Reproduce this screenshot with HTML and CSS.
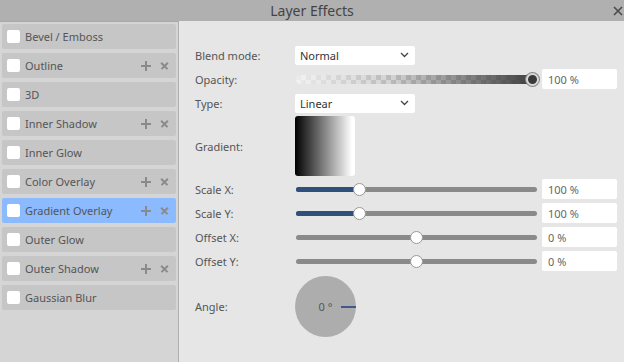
FILE: index.html
```html
<!DOCTYPE html>
<html lang="en">
<head>
    <meta charset="UTF-8">
    <title>Layer Effects</title>
    <link rel="stylesheet" href="styles.css">
</head>
<body>
    <div class="dialog">
        <div class="titlebar">
            <span class="title">Layer Effects</span>
            <svg class="close" width="10" height="10" viewBox="0 0 10 10"><path d="M1 1l8 8M9 1l-8 8" stroke="#4a4a4a" stroke-width="1.6"/></svg>
        </div>
        <div class="main">
            <div class="effects">
                <div class="effect"><span class="check"></span><span class="name">Bevel / Emboss</span></div>
                <div class="effect"><span class="check"></span><span class="name">Outline</span><span class="tools"><i class="plus"></i><i class="del"></i></span></div>
                <div class="effect"><span class="check"></span><span class="name">3D</span></div>
                <div class="effect"><span class="check"></span><span class="name">Inner Shadow</span><span class="tools"><i class="plus"></i><i class="del"></i></span></div>
                <div class="effect"><span class="check"></span><span class="name">Inner Glow</span></div>
                <div class="effect"><span class="check"></span><span class="name">Color Overlay</span><span class="tools"><i class="plus"></i><i class="del"></i></span></div>
                <div class="effect on"><span class="check"></span><span class="name">Gradient Overlay</span><span class="tools"><i class="plus"></i><i class="del"></i></span></div>
                <div class="effect"><span class="check"></span><span class="name">Outer Glow</span></div>
                <div class="effect"><span class="check"></span><span class="name">Outer Shadow</span><span class="tools"><i class="plus"></i><i class="del"></i></span></div>
                <div class="effect"><span class="check"></span><span class="name">Gaussian Blur</span></div>
            </div>
            <div class="settings">
                <div class="row">
                    <label>Blend mode:</label>
                    <div class="select">Normal<svg width="9" height="6" viewBox="0 0 9 6"><path d="M1 1l3.5 3.5L8 1" fill="none" stroke="#444" stroke-width="1.3"/></svg></div>
                </div>
                <div class="row">
                    <label>Opacity:</label>
                    <div class="slider opacity"><span class="knob dark" style="left:236px"></span></div>
                    <div class="value">100 %</div>
                </div>
                <div class="row">
                    <label>Type:</label>
                    <div class="select">Linear<svg width="9" height="6" viewBox="0 0 9 6"><path d="M1 1l3.5 3.5L8 1" fill="none" stroke="#444" stroke-width="1.3"/></svg></div>
                </div>
                <div class="row tall">
                    <label>Gradient:</label>
                    <div class="swatch"></div>
                </div>
                <div class="row">
                    <label>Scale X:</label>
                    <div class="slider"><span class="fill" style="width:63px"></span><span class="knob" style="left:63px"></span></div>
                    <div class="value">100 %</div>
                </div>
                <div class="row">
                    <label>Scale Y:</label>
                    <div class="slider"><span class="fill" style="width:63px"></span><span class="knob" style="left:63px"></span></div>
                    <div class="value">100 %</div>
                </div>
                <div class="row">
                    <label>Offset X:</label>
                    <div class="slider"><span class="knob" style="left:120px"></span></div>
                    <div class="value">0 %</div>
                </div>
                <div class="row">
                    <label>Offset Y:</label>
                    <div class="slider"><span class="knob" style="left:120px"></span></div>
                    <div class="value">0 %</div>
                </div>
                <div class="row angle">
                    <label>Angle:</label>
                    <div class="dial"><span class="deg">0 °</span><span class="hand"></span></div>
                </div>
            </div>
        </div>
    </div>
</body>
</html>
```

FILE: styles.css
```css
* {
    padding: 0;
    margin: 0;
    box-sizing: border-box;
}
body {
    font-family: "Segoe UI", "Noto Sans", sans-serif;
    font-size: 11px;
    color: #555;
    background: #e6e6e6;
}
.dialog {
    width: 624px;
    height: 362px;
    display: flex;
    flex-direction: column;
}
.titlebar {
    height: 21px;
    background: #b0b0b0;
    display: flex;
    align-items: center;
    justify-content: center;
    position: relative;
}
.title {
    font-size: 14px;
    color: #444;
}
.close {
    position: absolute;
    right: 1px;
    top: 6px;
}
.main {
    flex: 1;
    display: flex;
}
.effects {
    width: 179px;
    background: #d5d5d5;
    border-top: 1px solid #a8a8a8;
    border-right: 1px solid #b0b0b0;
    padding: 2px 2px 0 2px;
    display: flex;
    flex-direction: column;
    gap: 4px;
}
.effect {
    height: 25px;
    background: #c6c6c6;
    border-radius: 2px;
    display: flex;
    align-items: center;
    padding-left: 5px;
}
.effect.on {
    background: #8bbaff;
}
.check {
    width: 13px;
    height: 13px;
    background: #fff;
    border-radius: 2px;
    margin-right: 5px;
}
.name {
    flex: 1;
    font-size: 11px;
    color: #555;
}
.tools {
    display: flex;
    gap: 8px;
    margin-right: 7px;
}
.tools i {
    width: 10px;
    height: 10px;
    position: relative;
}
.tools i::before,
.tools i::after {
    content: "";
    position: absolute;
    left: 0;
    top: 4px;
    width: 10px;
    height: 2px;
    background: #8a8a8a;
}
.tools .plus::after {
    transform: rotate(90deg);
}
.tools .del::before {
    transform: rotate(45deg);
    height: 1.5px;
    left: 1px;
    width: 9px;
}
.tools .del::after {
    transform: rotate(-45deg);
    height: 1.5px;
    left: 1px;
    width: 9px;
}
.settings {
    flex: 1;
    padding: 24px 7px 0 16px;
    display: flex;
    flex-direction: column;
    gap: 4px;
}
.row {
    height: 20px;
    display: flex;
    align-items: center;
}
.row.tall {
    height: 58px;
}
.row.angle {
    height: 61px;
    margin-top: 1px;
}
.row label {
    width: 100px;
    font-size: 11px;
    color: #555;
}
.select {
    width: 120px;
    height: 19px;
    background: #fff;
    border-radius: 2px;
    padding: 0 6px 0 5px;
    display: flex;
    align-items: center;
    justify-content: space-between;
    color: #333;
}
.slider {
    position: relative;
    width: 241px;
    height: 5px;
    margin-left: 1px;
    border-radius: 3px;
    background: #8a8a8a;
}
.slider.opacity {
    height: 9px;
    border-radius: 4px;
    background:
        linear-gradient(to right, rgba(245,245,245,0.8), rgba(140,140,140,0.2) 40%, #3c3c3c),
        repeating-conic-gradient(#e4e4e4 0 25%, #c4c4c4 0 50%) 0 0 / 10px 10px;
}
.fill {
    position: absolute;
    left: 0;
    top: 0;
    height: 5px;
    border-radius: 3px 0 0 3px;
    background: #2f4f7c;
}
.knob {
    position: absolute;
    top: 50%;
    width: 13px;
    height: 13px;
    margin: -6.5px 0 0 -6.5px;
    border-radius: 50%;
    background: #fff;
    border: 1px solid #999;
}
.knob.dark {
    background: #3a3a3a;
    border: 2px solid #d8d8d8;
    box-shadow: 0 0 0 1px #888;
}
.value {
    width: 75px;
    height: 20px;
    margin-left: 5px;
    background: #fff;
    border-radius: 2px;
    padding-left: 6px;
    display: flex;
    align-items: center;
    color: #666;
}
.swatch {
    width: 60px;
    height: 60px;
    border-radius: 3px;
    background: linear-gradient(to right, #000, #fff 95%);
}
.dial {
    width: 61px;
    height: 61px;
    border-radius: 50%;
    background: #adadad;
    position: relative;
    display: flex;
    align-items: center;
    justify-content: center;
}
.deg {
    color: #555;
    font-size: 11px;
}
.hand {
    position: absolute;
    right: 0;
    top: 30px;
    width: 15px;
    height: 2px;
    background: #3e5a8a;
}
```
